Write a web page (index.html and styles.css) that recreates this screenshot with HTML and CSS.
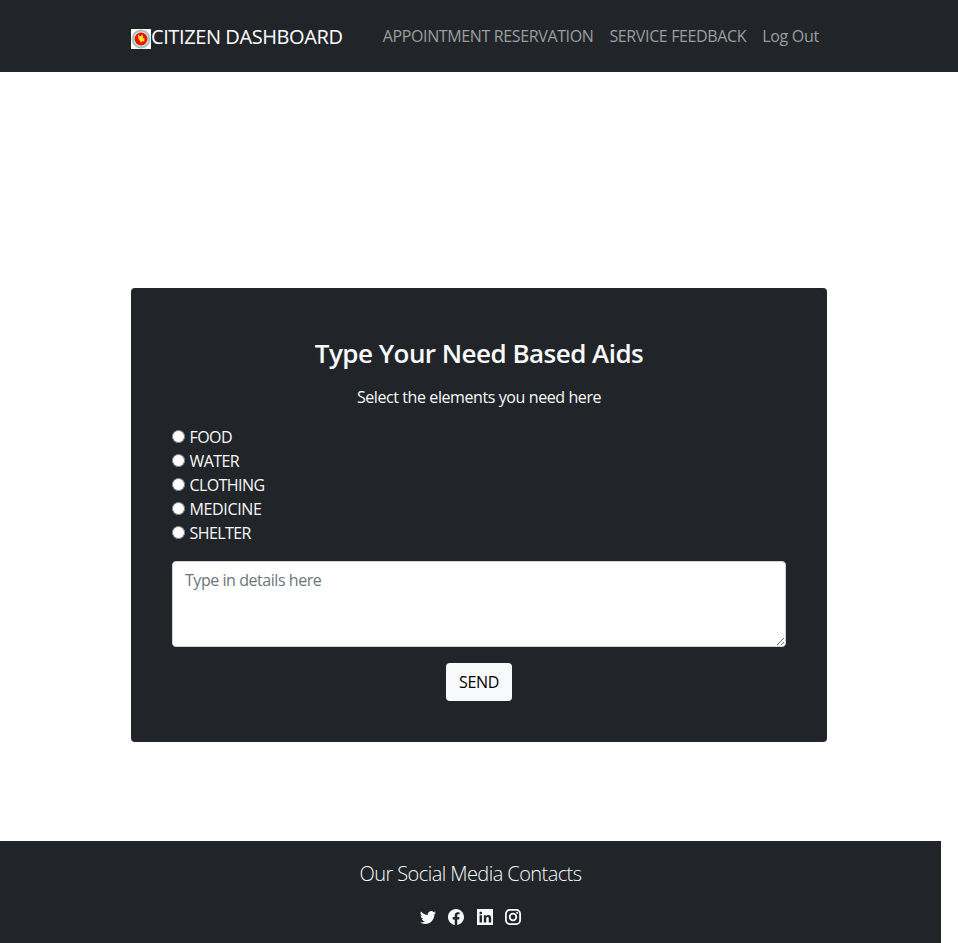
FILE: index.html
```html
<!DOCTYPE html>
<html lang="en">
<head>
<meta charset="utf-8">
<title>Citizen Dashboard</title>
<link rel="stylesheet" href="styles.css">
</head>
<body>
<nav class="navbar">
  <div class="container">
    <a class="brand"><svg class="seal" viewBox="0 0 20 20"><rect width="20" height="20" fill="#fff"/><circle cx="10" cy="10" r="8.4" fill="#dfeae3" stroke="#a3c4b2" stroke-width="2"/><circle cx="10" cy="10" r="6.5" fill="#e81410"/><path d="M7 5.5l2 1.8 1.2-.3.8-1.5 1.2 2-.3 1.5 1.6.2-.3 3.6-1.8-.8-1.4 2-1.2-2.4-1.5-2z" fill="#ffe11a"/></svg><span>CITIZEN DASHBOARD</span></a>
    <div class="links"><a>APPOINTMENT RESERVATION</a><a>SERVICE FEEDBACK</a><a class="logout">Log Out</a></div>
  </div>
</nav>
<main class="aid">
  <h2>Type Your Need Based Aids</h2>
  <p class="lead">Select the elements you need here</p>
  <div class="options">
    <label><input type="radio" name="aid"><span>FOOD</span></label>
    <label><input type="radio" name="aid"><span>WATER</span></label>
    <label><input type="radio" name="aid"><span>CLOTHING</span></label>
    <label><input type="radio" name="aid"><span class="medicine">MEDICINE</span></label>
    <label><input type="radio" name="aid"><span>SHELTER</span></label>
  </div>
  <textarea placeholder="Type in details here"></textarea>
  <button type="button">SEND</button>
</main>
<footer>
  <p>Our Social Media Contacts</p>
  <div class="social">
    <svg viewBox="0 0 16 16"><path d="M5.026 15c6.038 0 9.341-5.003 9.341-9.334 0-.14 0-.282-.006-.422A6.685 6.685 0 0 0 16 3.542a6.658 6.658 0 0 1-1.889.518 3.301 3.301 0 0 0 1.447-1.817 6.533 6.533 0 0 1-2.087.793A3.286 3.286 0 0 0 7.875 6.03a9.325 9.325 0 0 1-6.767-3.429 3.289 3.289 0 0 0 1.018 4.382A3.323 3.323 0 0 1 .64 6.575v.045a3.288 3.288 0 0 0 2.632 3.218 3.203 3.203 0 0 1-.865.115 3.23 3.23 0 0 1-.614-.057 3.283 3.283 0 0 0 3.067 2.277A6.588 6.588 0 0 1 .78 13.58a6.32 6.32 0 0 1-.78-.045A9.344 9.344 0 0 0 5.026 15z"/></svg>
    <svg viewBox="0 0 16 16"><path d="M16 8.049c0-4.446-3.582-8.05-8-8.05C3.58 0-.002 3.603-.002 8.05c0 4.017 2.926 7.347 6.75 7.951v-5.625h-2.03V8.05H6.75V6.275c0-2.017 1.195-3.131 3.022-3.131.876 0 1.791.157 1.791.157v1.98h-1.009c-.993 0-1.303.621-1.303 1.258v1.51h2.218l-.354 2.326H9.25V16c3.824-.604 6.75-3.934 6.75-7.951z"/></svg>
    <svg viewBox="0 0 16 16"><path d="M0 0h16v16H0zM4.943 13.394V6.169H2.542v7.225zM3.743 5.182c.837 0 1.358-.554 1.358-1.248-.015-.709-.52-1.248-1.342-1.248s-1.359.54-1.359 1.248c0 .694.521 1.248 1.327 1.248zM9.25 13.394V9.359c0-.216.016-.432.08-.586.173-.431.568-.878 1.232-.878.869 0 1.216.662 1.216 1.634v3.865h2.401V9.25c0-2.22-1.184-3.252-2.764-3.252-1.274 0-1.845.7-2.165 1.193v-1.022h-2.4v7.225z" fill-rule="evenodd"/></svg>
    <svg class="instagram" viewBox="0 0 16 16"><rect x=".9" y=".9" width="14.2" height="14.2" rx="3.8"/><circle cx="8" cy="8" r="3.3"/><circle class="dot" cx="12.2" cy="3.8" r="1"/></svg>
  </div>
</footer>
</body>
</html>
```

FILE: styles.css
```css
* { box-sizing: border-box; }
html { overflow: hidden; }
body { margin: 0; height: 943px; overflow: hidden; display: flex; flex-direction: column; background: #fff; color: #f8f9fa; font: 16px/24px "Open Sans", "Noto Sans", sans-serif; letter-spacing: -.41px; }
.navbar { height: 72px; background: #212529; flex: none; }
.container { width: 696px; height: 100%; margin: 0 auto; display: flex; align-items: center; justify-content: space-between; }
.brand { display: flex; align-items: center; padding-top: 2px; font-size: 20px; line-height: 30px; color: #fff; }
.seal { width: 20px; height: 20px; margin-top: 4px; }
.links { display: flex; gap: 16px; padding: 0 8px 0 0; color: #9b9d9e; letter-spacing: -.37px; }
.logout { letter-spacing: -.28px; }
.aid { width: 696px; height: 454px; margin: 216px auto 0; padding: 48px 41px 41px; background: #212529; border-radius: 4px; display: flex; flex-direction: column; align-items: center; flex: none; }
h2 { margin: 0 0 15px; font-size: 26px; line-height: 34px; font-weight: 600; letter-spacing: -.53px; }
.lead { margin: 0 0 16px; }
.options { align-self: stretch; margin-bottom: 16px; letter-spacing: -.58px; }
.medicine { letter-spacing: -.35px; }
label { display: flex; align-items: center; height: 24px; }
input { width: 13px; height: 13px; margin: -2px 4.5px 0 0; }
textarea { flex: none; width: 614px; height: 86px; padding: 6px 12px; border: 1px solid #ced4da; border-radius: 4px; font: inherit; letter-spacing: -.45px; resize: vertical; }
textarea::placeholder { color: #6c757d; }
button { width: 66px; height: 38px; flex: none; margin-top: 16px; padding: 0; border: 0; border-radius: 4px; background: #f8f9fa; color: #000; font: inherit; letter-spacing: -.3px; }
footer { width: 941px; flex: none; height: 102px; margin-top: 99px; background: #212529; text-align: center; padding-top: 18px; }
footer p { margin: 0 0 20px; font-size: 20px; line-height: 30px; font-weight: 300; letter-spacing: -.57px; }
.social { display: flex; justify-content: center; gap: 12.4px; }
.social svg { width: 16px; height: 16px; fill: #f8f9fa; }
.social .instagram { fill: none; stroke: #f8f9fa; stroke-width: 1.8; }
.instagram .dot { fill: #f8f9fa; stroke: none; }
```
